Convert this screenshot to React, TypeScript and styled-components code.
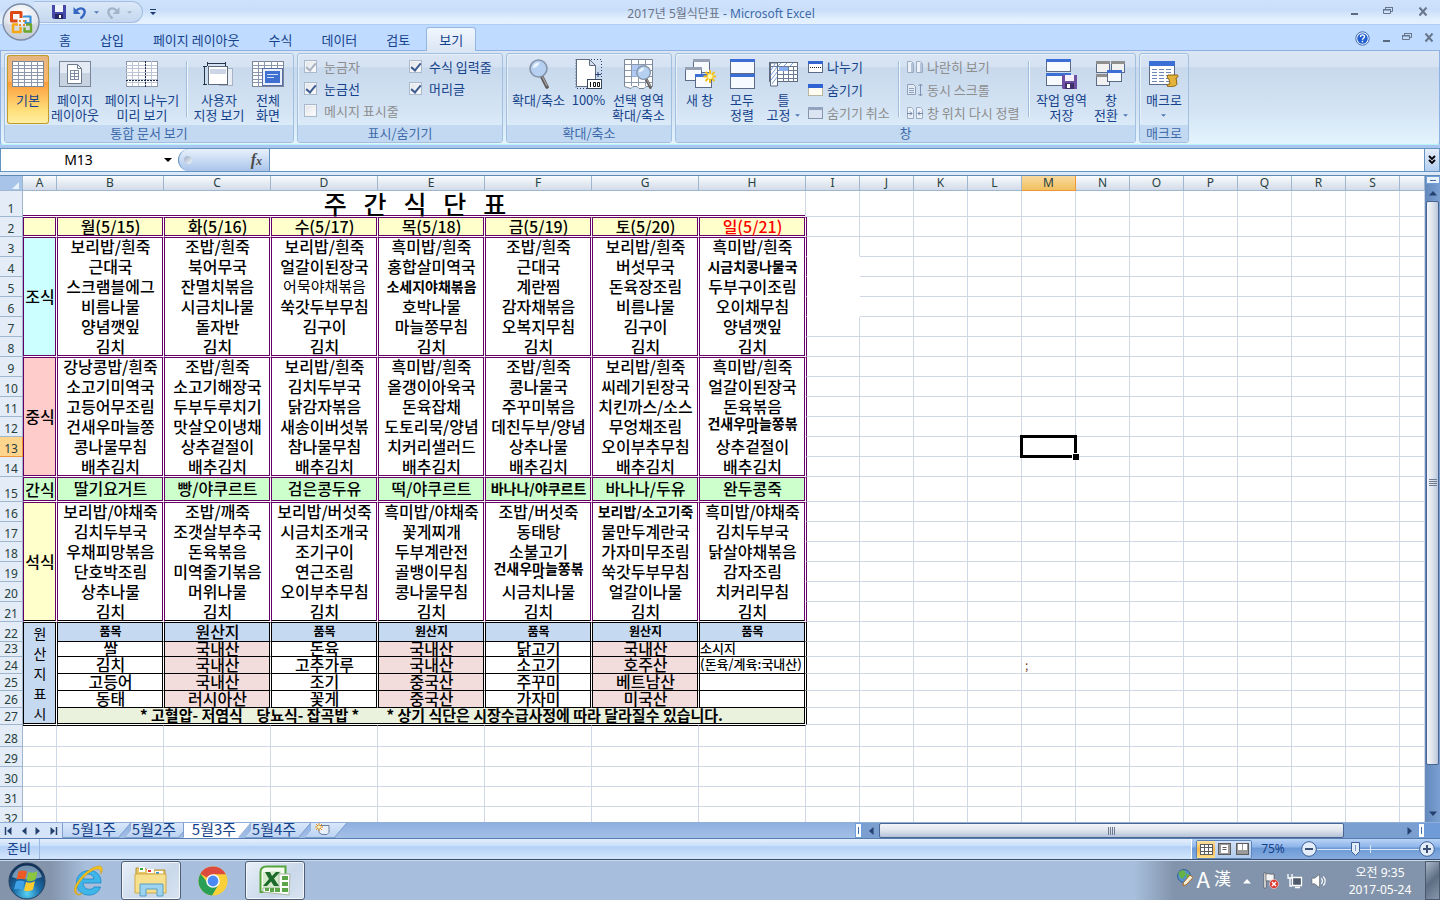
import React from "react";
import styled, { createGlobalStyle, css } from "styled-components";

const PURPLE = "#660066";
const BLACK = "#000000";
const GRID = "#d0d7e5";
const NAVY = "#15428b";
const UI_FONT = '"Noto Sans CJK KR", "Noto Sans", sans-serif';
const LATIN_FONT = '"Noto Sans", "Noto Sans CJK KR", sans-serif';

const GlobalStyle = createGlobalStyle`
  * { box-sizing: border-box; }
  body { margin: 0; font-family: ${UI_FONT}; font-size: 13px; color: ${NAVY}; overflow: hidden; }
  button, input { font: inherit; color: inherit; margin: 0; padding: 0; border: 0; background: none; border-radius: 0; }
  svg { display: block; flex: none; }
`;

const Window = styled.div`
  display: flex;
  flex-direction: column;
  height: 100vh;
  background: #bfdbff;
`;

/* ---------- title bar ---------- */
const TopArea = styled.header`
  position: relative;
  flex: none;
`;
const TitleBar = styled.div`
  height: 25px;
  display: flex;
  align-items: center;
  justify-content: space-between;
  padding-left: 34px;
  border-bottom: 1px solid #b0cff7;
  background: linear-gradient(#cfe2fb 0, #c9defa 40%, #e2effe 80%, #e6f1fe);
`;
const TitleText = styled.h1`
  position: absolute;
  left: 0;
  right: 0;
  top: 5px;
  margin: 0;
  padding-left: 2px;
  text-align: center;
  font: 400 12px/18px ${LATIN_FONT};
  color: #6a7486;
  pointer-events: none;
  span { color: #3e6aaa; }
`;
const QuickBar = styled.div`
  display: flex;
  align-items: center;
  gap: 7px;
`;
const QuickPill = styled.div`
  width: 109px;
  height: 22px;
  padding-left: 18px;
  display: flex;
  align-items: center;
  gap: 7px;
  border: 1px solid #a3bfe3;
  border-left: 0;
  border-radius: 0 11px 11px 0;
  background: linear-gradient(#dbe8f8, #c5d8ef);
`;
const IconButton = styled.button`
  display: flex;
  align-items: center;
  justify-content: center;
`;
const OfficeButton = styled.button`
  position: absolute;
  left: 2px;
  top: 3px;
  width: 38px;
  height: 38px;
`;
const WinButtons = styled.div`
  display: flex;
  align-items: center;
  gap: 25px;
  padding-right: 12px;
`;

/* ---------- ribbon tabs ---------- */
const TabBar = styled.nav`
  height: 25px;
  display: flex;
  justify-content: space-between;
  padding: 2px 6px 0 47px;
`;
const TabList = styled.div`
  display: flex;
  gap: 5px;
`;
const Tab = styled.button<{ $active?: boolean }>`
  padding: 0 12px;
  height: 24px;
  line-height: 20px;
  border: 1px solid transparent;
  border-width: 1px 0 0;
  ${(p) => p.$active && css`
    background: linear-gradient(#f0f6fd, #dbe6f5);
    border-color: #94b6e3;
    border-radius: 3px 3px 0 0;
    box-shadow: -1px 0 0 #94b6e3, 1px 0 0 #94b6e3;
  `}
`;
const TabTools = styled.div`
  display: flex;
  align-items: center;
  gap: 12px;
`;

/* ---------- ribbon ---------- */
const Ribbon = styled.section`
  flex: none;
  height: 98px;
  padding-bottom: 2px;
  background: #a9c7ee;
`;
const RibbonPanel = styled.div`
  height: 95px;
  display: flex;
  gap: 3px;
  padding: 2px 3px;
  border: 1px solid #8db2e3;
  border-bottom-color: #b9f2fb;
  border-radius: 0 0 3px 3px;
  background: linear-gradient(#dbe6f4 0, #d5e2f2 17%, #c8d9ed 18%, #d4e4f4 65%, #e3f4fd);
`;
const Group = styled.div<{ $w: number }>`
  width: ${(p) => p.$w}px;
  height: 90px;
  display: flex;
  flex-direction: column;
  border: 1px solid #a1bfde;
  border-radius: 3px;
  overflow: hidden;
  box-shadow: inset 1px 1px 0 #e8f1fa;
`;
const GroupBody = styled.div`
  flex: 1;
  display: flex;
  padding: 1px 2px 0;
`;
const GroupLabel = styled.div`
  height: 17px;
  line-height: 16px;
  text-align: center;
  color: #3e6aaa;
  background: #c2d9f1;
`;
const BigButton = styled.button<{ $w: number; $on?: boolean }>`
  width: ${(p) => p.$w}px;
  height: 69px;
  flex: none;
  display: flex;
  flex-direction: column;
  align-items: center;
  gap: 2px;
  padding-top: 3px;
  line-height: 15px;
  white-space: pre;
  ${(p) => p.$on && css`
    border-radius: 3px;
    background: linear-gradient(#e3b583 0, #fcb766 38%, #fd9c3c 40%, #fedf7a 80%, #fff0a8);
    box-shadow: inset 0 0 0 1px #c29b29;
  `}
`;
const IconBox = styled.span`
  height: 32px;
  display: flex;
  align-items: center;
`;
const Separator = styled.span`
  width: 2px;
  height: 56px;
  margin: 6px 3px 0;
  flex: none;
  background: linear-gradient(90deg, #a0bcdc 50%, #f3f8fd 50%);
`;
const SmallColumn = styled.div<{ $w: number }>`
  width: ${(p) => p.$w}px;
  flex: none;
  display: flex;
  flex-direction: column;
  padding-left: 4px;
`;
const SmallButton = styled.button`
  height: 23px;
  display: flex;
  align-items: center;
  gap: 4px;
  white-space: nowrap;
  &:disabled { color: #8d8d8d; }
`;
const CheckGrid = styled.div`
  display: grid;
  grid-template-columns: 105px auto;
  grid-auto-rows: 22px;
  align-content: start;
  padding-left: 4px;
`;
const CheckLabel = styled.label<{ $off?: boolean }>`
  display: flex;
  align-items: center;
  gap: 7px;
  white-space: nowrap;
  color: ${(p) => (p.$off ? "#8d8d8d" : NAVY)};
`;
const CheckBox = styled.input`
  appearance: none;
  width: 13px;
  height: 13px;
  display: flex;
  justify-content: center;
  background: linear-gradient(135deg, #dfe3e8, #fff);
  border: 1px solid #abb9cc;
  box-shadow: inset 0 0 0 1px #f4f4f4;
  &:checked::after {
    content: "";
    width: 4px;
    height: 8px;
    border: solid #3d5c92;
    border-width: 0 2px 2px 0;
    transform: rotate(40deg);
  }
  &:disabled:checked::after { border-color: #a9b2c2; }
`;

/* ---------- formula bar ---------- */
const FormulaBar = styled.div`
  flex: none;
  height: 28px;
  display: flex;
  border-top: 1px solid #6593c1;
  border-bottom: 1px solid #6188b0;
  background: #dce9f8;
  padding-bottom: 3px;
`;
const NameBox = styled.div`
  width: 178px;
  display: flex;
  align-items: center;
  padding-right: 6px;
  background: #fff;
  border-bottom: 1px solid #6593c1;
  border-left: 1px solid #6593c1;
`;
const NameInput = styled.input`
  flex: 1;
  min-width: 0;
  padding-right: 8px;
  text-align: center;
  color: #000;
  font: 400 14px/20px ${LATIN_FONT};
`;
const FxArea = styled.div`
  width: 92px;
  background: #fff;
  border-right: 1px solid #6593c1;
  border-bottom: 1px solid #6593c1;
`;
const FxPill = styled.div`
  height: 100%;
  display: flex;
  align-items: center;
  justify-content: space-between;
  padding: 0 7px 0 5px;
  border-left: 1px solid #6593c1;
  border-radius: 11px 0 0 11px;
  background: linear-gradient(#e8f1fc, #c3d7f1 60%, #a9c4ea);
`;
const FxDot = styled.span`
  width: 8px;
  height: 8px;
  border-radius: 50%;
  background: linear-gradient(135deg, #9daec5, #f2f6fb);
`;
const FxButton = styled.button`
  font: italic 700 16px/20px "Liberation Serif", serif;
  color: #4a4a4a;
  span { font-size: 12px; }
`;
const FormulaInput = styled.input`
  flex: 1;
  min-width: 0;
  background: #fff;
  border-bottom: 1px solid #6593c1;
`;
const ExpandButton = styled(IconButton)`
  width: 16px;
  border: 1px solid #6593c1;
  border-top: 0;
  background: linear-gradient(#e4eefb, #b4ceef);
`;

/* ---------- sheet ---------- */
const SheetArea = styled.main`
  flex: 1;
  min-height: 0;
  display: flex;
`;
const SheetClip = styled.div`
  flex: 1;
  min-width: 0;
  overflow: hidden;
  background: #fff;
`;
const Grid = styled.table`
  width: 100%;
  table-layout: fixed;
  border-collapse: separate;
  border-spacing: 0;
  color: #000;
`;
const GridRow = styled.tr<{ $h: number }>`
  height: ${(p) => p.$h}px;
`;
const ColHead = styled.th<{ $on?: boolean }>`
  height: 15px;
  padding: 0;
  font: 400 12px/14px ${LATIN_FONT};
  color: #27413e;
  border-right: 1px solid ${(p) => (p.$on ? "#f29536" : "#9eb6ce")};
  border-bottom: 1px solid ${(p) => (p.$on ? "#f29536" : "#9eb6ce")};
  background: ${(p) => (p.$on ? "linear-gradient(#f9d99f, #f1c15f)" : "linear-gradient(#f9fcfd, #d3dbe9)")};
`;
const Corner = styled(ColHead)`
  background: #a9c4e9;
  svg { margin: 2px 3px 0 auto; }
`;
const RowHead = styled.th<{ $on?: boolean }>`
  padding: 0;
  vertical-align: bottom;
  font: 400 12px/14px ${LATIN_FONT};
  color: #27413e;
  background: ${(p) => (p.$on ? "#ffd58d" : "#e4ecf7")};
  border-right: 1px solid ${(p) => (p.$on ? "#f29536" : "#9eb6ce")};
  border-bottom: 1px solid ${(p) => (p.$on ? "#f29536" : "#9eb6ce")};
`;
const EmptyCell = styled.td<{ $left?: string; $top?: string; $noRight?: boolean; $noBottom?: boolean; $ink?: string }>`
  position: relative;
  padding: 0 0 0 3px;
  font-size: 12px;
  line-height: 12px;
  color: ${(p) => p.$ink || "#000"};
  border-right: 1px solid ${(p) => (p.$noRight ? "#fff" : GRID)};
  border-bottom: 1px solid ${(p) => (p.$noBottom ? "#fff" : GRID)};
  ${(p) => p.$left && css`border-left: 1px solid ${p.$left};`}
  ${(p) => p.$top && css`border-top: 1px solid ${p.$top};`}
`;
const SheetTitle = styled.td`
  padding: 0;
  vertical-align: top;
  border-right: 1px solid ${GRID};
  border-bottom: 1px solid #fff;
  box-shadow: inset 0 -1px 0 ${PURPLE};
  div {
    height: 23px;
    padding-left: 2px;
    line-height: 25px;
    text-align: center;
    white-space: pre;
    font-size: 25px;
    font-weight: 500;
  }
`;
type Edge = "none" | "single" | "double";
const BoxCell = styled.td<{ $bg?: string; $line: string; $top?: boolean; $bottom: Edge; $bottomLine?: string }>`
  padding: 0;
  vertical-align: top;
  background: ${(p) => p.$bg || "#fff"};
  border-left: 1px solid ${(p) => p.$line};
  border-right: 1px solid #fff;
  ${(p) => p.$top && css`border-top: 1px solid ${p.$line};`}
  ${(p) => p.$bottom === "double" && css`border-bottom: 1px solid #fff;`}
  ${(p) => p.$bottom === "single" && css`border-bottom: 1px solid ${p.$line};`}
  box-shadow: inset -1px 0 0 ${(p) => p.$line}
    ${(p) => p.$bottom === "double" && css`, inset 0 -1px 0 ${p.$bottomLine || p.$line}`};
`;
type TextKind = "normal" | "small" | "thin" | "wrap" | "label" | "note" | "side" | "foot";
const CellText = styled.div<{ $h: number; $kind: TextKind; $red?: boolean }>`
  height: ${(p) => p.$h}px;
  display: flex;
  align-items: center;
  justify-content: center;
  white-space: pre;
  text-align: center;
  font-size: 16px;
  line-height: 16px;
  font-weight: 500;
  color: ${(p) => (p.$red ? "#ff0000" : "#000")};
  ${(p) => p.$kind === "small" && css`font-size: 14px; font-weight: 700;`}
  ${(p) => p.$kind === "thin" && css`font-size: 15px; font-weight: 400;`}
  ${(p) => p.$kind === "wrap" && css`font-size: 14px; font-weight: 700; line-height: 13px; align-items: flex-start; overflow: hidden;`}
  ${(p) => p.$kind === "label" && css`font-size: 12px; font-weight: 700;`}
  ${(p) => p.$kind === "note" && css`font-size: 13px; justify-content: flex-start;`}
  ${(p) => p.$kind === "side" && css`font-size: 14px; line-height: 20px; font-weight: 400;`}
  ${(p) => p.$kind === "foot" && css`font-size: 15px; font-weight: 700;`}
`;
const Selection = styled.span`
  position: absolute;
  z-index: 1;
  inset: -2px;
  border: 3px solid #000;
  &::after {
    content: "";
    position: absolute;
    right: -5px;
    bottom: -5px;
    width: 6px;
    height: 6px;
    background: #000;
    border: solid #fff;
    border-width: 1px 0 0 1px;
  }
`;
const VScroll = styled.div`
  width: 15px;
  flex: none;
  display: flex;
  flex-direction: column;
  align-items: center;
  background: linear-gradient(90deg, #6389bd, #7b9fd0);
`;
const VSplit = styled.span`
  width: 14px;
  height: 8px;
  padding: 3px;
  border: 1px solid #6f9dd9;
  background: #eaf2fc;
  &::after { content: ""; display: block; height: 1px; background: #3f6ba7; }
`;
const VThumb = styled.div`
  width: 13px;
  flex: 1;
  display: flex;
  align-items: center;
  justify-content: center;
  border: 1px solid #4a6591;
  border-radius: 2px;
  background: linear-gradient(90deg, #f3f6fa, #dfe4ec 50%, #b9c6da);
`;
const VGap = styled.div`
  height: 57px;
  display: flex;
  align-items: flex-end;
  padding-bottom: 3px;
`;
const VArrow = styled.div`
  height: 17px;
  display: flex;
  align-items: center;
`;

/* ---------- sheet tabs / horizontal scroll ---------- */
const SheetTabs = styled.div`
  flex: none;
  height: 16px;
  display: flex;
  background: linear-gradient(#8fb0e0, #a3bfe6);
  border-top: 1px solid #8fafd9;
`;
const TabNav = styled.div`
  width: 63px;
  display: flex;
  align-items: center;
  justify-content: space-around;
  padding: 0 2px;
  background: #d5e4f8;
  border-right: 1px solid #7f9fcf;
`;
const SheetTab = styled.button<{ $active?: boolean; $w?: number; $first?: boolean }>`
  position: relative;
  width: ${(p) => p.$w || 60}px;
  height: 15px;
  padding: 0 0 3px 2px;
  line-height: 12px;
  font-size: 15px;
  z-index: ${(p) => (p.$active ? 2 : 1)};
  display: flex;
  align-items: center;
  justify-content: center;
  &::before {
    content: "";
    position: absolute;
    inset: 0 -2px 0 8px;
    z-index: -1;
    transform: skewX(-40deg);
    border-right: 1px solid #7f9fcf;
    border-bottom: 1px solid ${(p) => (p.$active ? "#fff" : "#7f9fcf")};
    background: ${(p) => (p.$active ? "#fff" : "linear-gradient(#d9e7fa, #bcd3f2)")};
  }
  &::after {
    content: "";
    position: absolute;
    inset: 0 20px 0 ${(p) => (p.$active || p.$first ? "0" : "8px")};
    z-index: -1;
    border-left: ${(p) => (p.$active ? "1px solid #7f9fcf" : "0")};
    border-bottom: 1px solid ${(p) => (p.$active ? "#fff" : "#7f9fcf")};
    background: ${(p) => (p.$active ? "#fff" : "linear-gradient(#d9e7fa, #bcd3f2)")};
  }
`;
const TabSet = styled.div`
  flex: 1;
  display: flex;
  isolation: isolate;
`;
const HScroll = styled.div`
  flex: 0 0 570px;
  width: 570px;
  display: flex;
  align-items: center;
  background: #7b9fd0;
`;
const HSplit = styled.span`
  width: 7px;
  height: 15px;
  padding: 3px 2px;
  background: #fff;
  border: 1px solid #6f9dd9;
  &::after { content: ""; display: block; width: 1px; height: 7px; background: #3f6ba7; }
`;
const HThumb = styled.div`
  flex: 1;
  height: 15px;
  display: flex;
  align-items: center;
  justify-content: center;
  border: 1px solid #4a6591;
  border-radius: 2px;
  background: linear-gradient(#f3f6fa, #dfe4ec 50%, #b3c2d8);
`;
const HArrow = styled.span<{ $w: number }>`
  width: ${(p) => p.$w}px;
  display: flex;
  justify-content: center;
`;
const HRest = styled.span`
  width: 57px;
`;
const ScrollCorner = styled.span`
  width: 15px;
  background: #6f9bd8;
`;

/* ---------- status bar ---------- */
const StatusBar = styled.footer`
  flex: none;
  height: 22px;
  display: flex;
  border-top: 1px solid #567db0;
  border-bottom: 1px solid #3b4e6b;
  background: linear-gradient(#e3eefc 0, #c9dffb 35%, #b3d0f5 38%, #cfe3fb 90%);
`;
const Ready = styled.div`
  width: 40px;
  padding-left: 7px;
  line-height: 18px;
  border-right: 1px solid #9ab8e0;
`;
const StatusRight = styled.div`
  margin-left: auto;
  width: 249px;
  display: flex;
  align-items: center;
  padding-left: 4px;
  padding-right: 5px;
  border-left: 1px solid #fff;
  background: linear-gradient(#b9d3f7, #8db4e8 40%, #6c9ad6 45%, #86acdf);
`;
const ViewButtons = styled.div`
  display: flex;
  height: 19px;
  border: 1px solid #5d83b8;
  border-radius: 2px;
`;
const ViewButton = styled(IconButton)<{ $on?: boolean }>`
  width: 18px;
  background: ${(p) => (p.$on ? "linear-gradient(#fde3a5, #fbb94c 50%, #fee08a)" : "linear-gradient(#d2e2f7, #b1cbee)")};
`;
const Zoom = styled.button`
  width: 42px;
  font: 400 12px/18px ${LATIN_FONT};
`;
const ZoomTrack = styled.div`
  flex: 1;
  display: flex;
  align-items: center;
  margin-left: 7px;
`;
const ZoomRail = styled.div`
  flex: 1;
  height: 16px;
  display: flex;
  align-items: center;
  padding-left: 34px;
  gap: 10px;
  background: linear-gradient(#dbe8fa, #dbe8fa) center / 100% 1px no-repeat;
`;
const Tick = styled.span`
  width: 1px;
  height: 8px;
  background: #dbe8fa;
`;

/* ---------- taskbar ---------- */
const TaskBar = styled.div`
  flex: none;
  height: 40px;
  display: flex;
  align-items: center;
  border-top: 1px solid #c7d9ec;
  background: linear-gradient(90deg, #8394ab 0, #8394ab 50px, #a7bfdc 86px, #a7bfdc calc(100% - 306px), #8294ab calc(100% - 266px));
`;
const TaskButton = styled.button<{ $w: number; $open?: boolean }>`
  width: ${(p) => p.$w}px;
  height: 39px;
  display: flex;
  align-items: center;
  justify-content: center;
  ${(p) => p.$open && css`
    border: 1px solid #4e5f77;
    border-radius: 3px;
    background: linear-gradient(135deg, #e8eff8, #c9d8ea 60%, #d9e4f1);
    box-shadow: inset 0 0 0 1px #f3f7fc;
  `}
`;
const Tray = styled.div`
  margin-left: auto;
  display: flex;
  align-items: center;
  gap: 8px;
  height: 100%;
  color: #fff;
`;
const TrayMore = styled(IconButton)`
  padding: 0 3px;
`;
const Ime = styled.div`
  display: flex;
  align-items: center;
  gap: 4px;
  padding-bottom: 6px;
`;
const ImeButton = styled.button<{ $size: number }>`
  font: 400 ${(p) => p.$size}px/24px "Noto Sans CJK KR", sans-serif;
`;
const Clock = styled.div`
  width: 90px;
  text-align: center;
  font: 400 12px/17px ${LATIN_FONT};
`;
const ShowDesktop = styled.button`
  width: 15px;
  height: 39px;
  border: 1px solid #4b5a6e;
  background: linear-gradient(135deg, #a9b6c8, #5d6d83 50%, #8796ab);
`;

/* ---------- icon drawings ---------- */
const Caret = ({ color = "#4f7ab5", w = 5 }: { color?: string; w?: number }) => (
  <svg width={w} height={Math.ceil(w / 2)} viewBox="0 0 6 3"><path d="M0 0h6L3 3z" fill={color} /></svg>
);
const Arrow = ({ dir, color = "#24406e", bar }: { dir: "l" | "r" | "u" | "d"; color?: string; bar?: boolean }) => {
  const rot = { u: 0, r: 90, d: 180, l: 270 }[dir];
  return (
    <svg width="10" height="10" viewBox="0 0 10 10">
      <g transform={`rotate(${rot} 5 5)`}>
        <path d="M1 7.5h8L5 3z" fill={color} />
        {bar && <path d="M1 1.5h8" stroke={color} strokeWidth="1.5" />}
      </g>
    </svg>
  );
};
const OfficeLogo = () => (
  <svg width="38" height="38" viewBox="0 0 38 38">
    <defs>
      <radialGradient id="orbWhite" cx=".5" cy=".3" r=".75">
        <stop offset="0" stopColor="#ffffff" /><stop offset=".6" stopColor="#e3e7ee" /><stop offset="1" stopColor="#b2bdcd" />
      </radialGradient>
    </defs>
    <circle cx="19" cy="19" r="18" fill="url(#orbWhite)" stroke="#7d8ca6" strokeWidth="1.4" />
    <path d="M3 20a16 16 0 0 0 32 0c-8 3-24 3-32 0z" fill="#c9cfda" opacity=".6" />
    <g fill="none" strokeLinejoin="round">
      <path d="M15.500 18H9.500V9.500h9.500v5.500" stroke="#dc4a12" strokeWidth="3" />
      <path d="M22 14.500v-1h6.500v6.500h-5v-3" stroke="#3c8fd6" strokeWidth="2.200" />
      <path d="M16 21.500h-5v7.500h7.500v-5" stroke="#f3a712" strokeWidth="2.400" />
      <path d="M24 21.500h5v7h-6.500v-4" stroke="#6aa52c" strokeWidth="2.400" />
    </g>
    <path d="M17 17h2v2h-2zM21 17h2v2h-2zM17 21h2v2h-2zM21 21h2v2h-2z" fill="#e98a2b" />
  </svg>
);
const SaveIcon = () => (
  <svg width="14" height="14" viewBox="0 0 14 14">
    <path d="M0 0h14v14H1.500L0 12.500z" fill="#4547a9" /><path d="M3 0h8v7H3z" fill="#eef2fb" />
    <path d="M3 9h8v5H3z" fill="#23265f" /><path d="M7 10h2v3H7z" fill="#fff" />
  </svg>
);
const UndoIcon = ({ off }: { off?: boolean }) => (
  <svg width="14" height="13" viewBox="0 0 13 13">
    <g transform={off ? "translate(13 0) scale(-1 1)" : undefined}>
      <path d="M3 4.500C6 1 12 2 11 7c-.5 2.500-2 4-4 5.500" fill="none" stroke={off ? "#a5b4ca" : "#3566c0"} strokeWidth="2.400" />
      <path d="M0 1v7h7z" fill={off ? "#a5b4ca" : "#3566c0"} />
    </g>
  </svg>
);
const QuickMore = () => (
  <svg width="6" height="7" viewBox="0 0 6 7"><path d="M0 0h6v1H0zM0 3h6L3 6z" fill="#1f3d73" /></svg>
);
const MinIcon = () => <svg width="8" height="12" viewBox="0 0 8 12"><path d="M1 7h7v2H1z" fill="#5c6a80" /></svg>;
const RestoreIcon = () => (
  <svg width="10" height="11" viewBox="0 0 10 11">
    <path d="M2.500 2V.5h7v4H8M.5 2.500h7v4h-7z" fill="none" stroke="#68768c" /><path d="M0 2h8v1.500H0zM2 0h8v1H2z" fill="#68768c" />
  </svg>
);
const CloseIcon = () => (
  <svg width="10" height="11" viewBox="0 0 10 11"><path d="M1.500 .5l7 8M8.500 .5l-7 8" stroke="#68768c" strokeWidth="2" /></svg>
);
const HelpIcon = () => (
  <svg width="15" height="15" viewBox="0 0 15 15">
    <circle cx="7.500" cy="7.500" r="6.700" fill="#f4f9ff" stroke="#3d68b5" />
    <circle cx="7.500" cy="7.500" r="5.200" fill="#2060d0" />
    <path d="M5.500 6c0-3 4-2.700 4-.3 0 1.500-2 1.500-2 3M7.500 9.800v1.400" fill="none" stroke="#fff" strokeWidth="1.400" />
  </svg>
);
const CornerMark = () => <svg width="7" height="9" viewBox="0 0 7 9"><path d="M7 2v7H0z" fill="#e9f1fb" /></svg>;
const gridLines = (x: number, y: number, w: number, h: number, nx: number, ny: number) => {
  let d = "";
  for (let i = 1; i < nx; i++) d += `M${x + Math.round((w * i) / nx) + 0.5} ${y}v${h}`;
  for (let i = 1; i < ny; i++) d += `M${x} ${y + Math.round((h * i) / ny) + 0.5}h${w}`;
  return d;
};
const NormalIcon = () => (
  <svg width="32" height="26" viewBox="0 0 32 26">
    <rect x=".5" y=".5" width="31" height="25" fill="#fff" stroke="#7b8798" /><path d={gridLines(0, 0, 31, 25, 5, 7)} stroke="#8b98ab" />
  </svg>
);
const PageIcon = () => (
  <svg width="32" height="26" viewBox="0 0 32 26">
    <rect x=".5" y=".5" width="31" height="25" fill="#e3eaf3" stroke="#7b8798" /><path d="M1 12h30v13H1z" fill="#c8d3e2" />
    <path d="M8.500 3.500h10l4 4v15h-14z" fill="#fff" stroke="#6d7a8e" />
    <path d="M18.500 3.500v4h4" fill="none" stroke="#6d7a8e" /><path d="M11 9.500h9M11 12.500h9M11 15.500h9M11 18.500h9M11.500 9v10M15.500 9v10M19.500 9v10" stroke="#7c8ba3" />
  </svg>
);
const BreakIcon = () => (
  <svg width="32" height="26" viewBox="0 0 32 26">
    <rect x=".5" y=".5" width="31" height="25" fill="#fff" stroke="#8d99ab" /><path d={gridLines(0, 0, 31, 25, 5, 7)} stroke="#bcc5d3" />
    <path d="M19.500 0v26M0 19.500h32" stroke="#1d2c4c" strokeDasharray="2 1" />
  </svg>
);
const CustomIcon = () => (
  <svg width="32" height="26" viewBox="0 0 32 26">
    <rect x="16.500" y="7.500" width="13" height="17" fill="#e9eef5" stroke="#a9b3c3" />
    <rect x="5.500" y="5.500" width="19" height="18" fill="#fff" stroke="#5c687c" />
    <path d="M7 8h16v5H7z" fill="#ccd6e6" /><path d="M4.500 1v4M22.500 1v4M5 2.500h17M0 5.500h4M0 23.500h4M1.500 6v17" stroke="#26334d" fill="none" />
  </svg>
);
const FullIcon = () => (
  <svg width="32" height="26" viewBox="0 0 32 26">
    <rect x=".5" y=".5" width="31" height="25" fill="#fff" stroke="#7b8798" /><path d={gridLines(0, 0, 31, 25, 5, 7)} stroke="#8b98ab" />
    <rect x="10.500" y="7.500" width="20" height="17" fill="#e9f0fb" stroke="#5570a8" /><rect x="13" y="10" width="15" height="12" fill="#3f6fd0" />
    <path d="M15 13.500h11M15 16.500h7" stroke="#cfe0fb" />
  </svg>
);
const Lens = ({ x = 0, y = 0, s = 1 }: { x?: number; y?: number; s?: number }) => (
  <g transform={`translate(${x} ${y}) scale(${s})`}>
    <path d="M13 18l5 10" stroke="#5e5a5a" strokeWidth="3.600" strokeLinecap="round" /><path d="M13.500 18l4.500 9" stroke="#a8a4a4" strokeWidth="1.200" />
    <circle cx="9.500" cy="9.500" r="8.500" fill="#b5d0f0" stroke="#8593a8" strokeWidth="1.600" /><path d="M3.500 9a6 6 0 0 1 7-5.500c-1 4-3 5-7 5.500z" fill="#eaf4ff" />
  </g>
);
const ZoomIcon = () => <svg width="20" height="31" viewBox="0 0 20 31"><Lens /></svg>;
const HundredIcon = () => (
  <svg width="28" height="32" viewBox="0 0 28 32">
    <path d="M1 1.500h25.500v29H1z" fill="none" stroke="#29406d" strokeDasharray="1 2" />
    <path d="M1.500 1.500h13l6 6v21h-19z" fill="#fff" stroke="#5e6b80" /><path d="M14.500 1.500v6h6z" fill="#d8e0ec" stroke="#5e6b80" />
    <path d="M20 16.500h6M23 14v5" stroke="#29406d" />
    <rect x="12.500" y="21.500" width="14" height="9" fill="#fff" stroke="#39465c" />
    <path d="M15.500 24v5M18.500 24.500h2v4h-2zM22.500 24.500h2v4h-2z" fill="none" stroke="#111" />
  </svg>
);
const ZoomSelIcon = () => (
  <svg width="30" height="32" viewBox="0 0 30 32">
    <path d="M.5 1.500h28v27H22l-2 2h-5l-2-2H9l-2 2-6.500-2z" fill="#fff" stroke="#7b8798" />
    <path d="M1 6.500h27M1 12.500h27M1 18.500h27M1 24.500h27M7.500 2v26M14.500 2v26M21.500 2v26" stroke="#8b98ab" />
    <path d="M8 7h13v12H8z" fill="#9bbcf0" opacity=".8" /><Lens x={12} y={7} s={0.8} />
  </svg>
);
const Win = ({ x, y, w, h, c = "#3b6fd6", f = "#f7fafe" }: { x: number; y: number; w: number; h: number; c?: string; f?: string }) => (
  <g><rect x={x + 0.5} y={y + 0.5} width={w - 1} height={h - 1} fill={f} stroke="#5b6b88" /><rect x={x} y={y} width={w} height={3} fill={c} /></g>
);
const NewWinIcon = () => (
  <svg width="32" height="32" viewBox="0 0 32 32">
    <Win x={9} y={1} w={17} h={14} c="#97a3b5" /><Win x={1} y={9} w={17} h={14} c="#97a3b5" /><Win x={11} y={16} w={17} h={14} />
    <path d="M26 12v13M19.500 18.500h13M21.500 14l9 9M30.500 14l-9 9" stroke="#f5bf1a" strokeWidth="2" /><circle cx="26" cy="18.500" r="2.500" fill="#fff9b0" />
  </svg>
);
const ArrangeIcon = () => <svg width="25" height="30" viewBox="0 0 25 30"><Win x={0} y={0} w={25} h={15} /><Win x={0} y={15} w={25} h={15} /></svg>;
const FreezeIcon = () => (
  <svg width="30" height="26" viewBox="0 0 30 26">
    <rect x=".5" y="1.500" width="28" height="19" fill="#fff" stroke="#5e6b80" /><path d="M1.500 2v23h7V2z" fill="#fff" stroke="#5e6b80" />
    <path d="M9 9.500h20M9 13.500h20M9 17.500h20M14.500 5v16M19.500 5v16M24.500 5v16M1 5.500h28" stroke="#6c7c96" />
    <path d="M10 6h9v4h-9z" fill="#88aef0" /><path d="M2 9l4-6M2 14l6-8M2 19l6-8M3 23l5-7M9 5l3-3M15 5l3-3M21 5l3-3" stroke="#7aa0dd" />
  </svg>
);
const SplitIcon = () => (
  <svg width="15" height="12" viewBox="0 0 15 12"><rect x=".5" y=".5" width="14" height="11" fill="#fff" stroke="#5b6b88" /><path d="M0 0h15v3H0z" fill="#3465cf" /><path d="M2 6.500h11" stroke="#222" strokeDasharray="1 1" /></svg>
);
const HideIcon = () => (
  <svg width="15" height="12" viewBox="0 0 15 12"><rect x=".5" y=".5" width="14" height="11" fill="#fffdf2" stroke="#8a7c50" strokeDasharray="1 1" /><path d="M0 0h15v4H0z" fill="#2f62d2" /></svg>
);
const UnhideIcon = () => (
  <svg width="15" height="12" viewBox="0 0 15 12"><rect x=".5" y=".5" width="14" height="11" fill="#dbe4f0" stroke="#8796b0" /><path d="M0 0h15v3H0z" fill="#93a3bd" /></svg>
);
const SideIcon = () => (
  <svg width="16" height="13" viewBox="0 0 16 13"><path d="M.5 1.500h4l2 2v9h-6zM9.500 1.500h4l2 2v9h-6z" fill="#edf2f8" stroke="#9aabc4" /><path d="M5 3v9M14 3v9" stroke="#b5c3d8" strokeWidth="2" /></svg>
);
const SyncIcon = () => (
  <svg width="16" height="14" viewBox="0 0 16 14"><path d="M.5 1.500h6l2 2v8h-8zM2 5.500h5M2 7.500h5M2 9.500h5" fill="#e3eaf4" stroke="#8fa1bd" /><path d="M13.500 1v12M11.500 3l2-2 2 2M11.500 11l2 2 2-2" fill="none" stroke="#7f92b1" /></svg>
);
const ResetIcon = () => (
  <svg width="16" height="13" viewBox="0 0 16 13"><path d="M.5 1.500h4l2 2v9h-6zM9.500 1.500h4l2 2v9h-6z" fill="#edf2f8" stroke="#9aabc4" /><path d="M0 7.500h5M3 5.500l2 2-2 2M16 7.500h-5M13 5.500l-2 2 2 2" fill="none" stroke="#6f84a6" /></svg>
);
const WorkspaceIcon = () => (
  <svg width="31" height="32" viewBox="0 0 31 32">
    <Win x={0} y={1} w={25} h={13} /><Win x={0} y={15} w={25} h={13} />
    <path d="M16 17h15v14H17l-1-1z" fill="#6d4fa3" /><path d="M19 17h9v6h-9z" fill="#f4f0fb" /><path d="M19 25h9v6h-9z" fill="#40306a" /><path d="M21 26h3v4h-3z" fill="#fff" />
  </svg>
);
const SwitchIcon = () => (
  <svg width="30" height="26" viewBox="0 0 30 26">
    <Win x={0} y={0} w={14} h={12} c="#8f8f8f" f="#f1f1f1" /><Win x={15} y={0} w={14} h={12} c="#8f8f8f" f="#f1f1f1" />
    <Win x={0} y={13} w={14} h={12} c="#8f8f8f" f="#f1f1f1" /><Win x={11} y={9} w={15} h={12} />
  </svg>
);
const MacroIcon = () => (
  <svg width="30" height="26" viewBox="0 0 30 26">
    <rect x=".5" y=".5" width="25" height="23" fill="#fff" stroke="#5b6b88" /><path d="M0 0h26v5H0z" fill="#3b6fd6" />
    <path d="M3 8.500h20M3 11.500h20M3 14.500h20M3 17.500h20M3 20.500h20" stroke="#6d85b5" strokeDasharray="5 2" />
    <path d="M19 14h9c2 0 1 3-1 3l1 6c-1 3-8 3-10 2 0-2 2-2 3-2l-1-5c-2 0-2-3-1-4z" fill="#e4b33a" stroke="#8c6414" />
  </svg>
);
const NewSheetIcon = () => (
  <svg width="15" height="12" viewBox="0 0 15 12">
    <path d="M4 2.500h10v7l-2 2H7l-3-2z" fill="#e7effa" stroke="#6c7f9f" /><path d="M4 0v8M0 4h8M1 1l6 6M7 1L1 7" stroke="#e8941a" /><circle cx="4" cy="4" r="1.500" fill="#fff6b8" />
  </svg>
);
const Grip = ({ vertical }: { vertical?: boolean }) => (
  <svg width="8" height="8" viewBox="0 0 8 8"><path d={vertical ? "M0 .5h8M0 2.500h8M0 4.500h8M0 6.500h8" : "M.5 0v8M2.500 0v8M4.500 0v8M6.500 0v8"} stroke="#6d7b91" /></svg>
);
const ViewNormal = () => <svg width="13" height="11" viewBox="0 0 13 11"><rect x=".5" y=".5" width="12" height="10" fill="#fff" stroke="#5c5c5c" /><path d="M4.500 0v11M8.500 0v11M0 3.500h13M0 7.500h13" stroke="#5c5c5c" /></svg>;
const ViewPage = () => <svg width="13" height="12" viewBox="0 0 13 12"><rect x=".5" y=".5" width="12" height="11" fill="#9a9a9a" stroke="#5c5c5c" /><path d="M3 2h7v8H3z" fill="#fff" /><path d="M4.500 4.500h4M4.500 6.500h4" stroke="#5c5c5c" /></svg>;
const ViewBreak = () => <svg width="13" height="12" viewBox="0 0 13 12"><rect x=".5" y=".5" width="12" height="11" fill="#9a9a9a" stroke="#5c5c5c" /><path d="M2 1h4v6H2zM7 1h4v6H7z" fill="#fff" /></svg>;
const ZoomSign = ({ plus }: { plus?: boolean }) => (
  <svg width="16" height="16" viewBox="0 0 16 16"><circle cx="8" cy="8" r="7.300" fill="#e3edfa" stroke="#3d5f95" /><path d={plus ? "M4 8h8M8 4v8" : "M4 8h8"} stroke="#3d5075" strokeWidth="2" /></svg>
);
const ZoomHandle = () => <svg width="9" height="14" viewBox="0 0 9 14"><path d="M.5 .5h8v9l-4 4-4-4z" fill="#e3edfa" stroke="#3d5f95" /><path d="M4.500 3v6" stroke="#7b98c4" /></svg>;
const StartOrb = () => (
  <svg width="38" height="38" viewBox="0 0 38 38">
    <defs><radialGradient id="orbBlue" cx=".5" cy=".85" r=".8"><stop offset="0" stopColor="#59d4f5" /><stop offset=".45" stopColor="#1c6ca8" /><stop offset="1" stopColor="#0f2f57" /></radialGradient></defs>
    <circle cx="19" cy="19" r="18" fill="url(#orbBlue)" stroke="#27405f" /><path d="M4 15a15.500 15.500 0 0 1 30 0c-8 3-22 3-30 0z" fill="#b5cbe0" opacity=".6" />
    <path d="M10.500 9.500c3-1.500 5.500-1 8.500 0l-2 8c-3-1-5.500-1-8.500 0z" fill="#ee5a24" /><path d="M20.500 10c3 1 6 1 9-1l-2 8.500c-3 2-6 2-9 1z" fill="#8cc63f" />
    <path d="M8 19.500c3-1.500 5.500-1 8.500 0l-2 8c-3-1-5.500-1-8.500 0z" fill="#3fa2e8" /><path d="M18 20c3 1 6 1 9-1l-2 8.500c-3 2-6 2-9 1z" fill="#fccb2f" />
  </svg>
);
const IeIcon = () => (
  <svg width="32" height="32" viewBox="0 0 32 32">
    <path d="M29 18H11c0 7 9 8 11 4h6.500C25 34 4 33 4.500 17 5 2 30 1 29 18zm-7-4c-1-6.500-10-6.500-11 0z" fill="#3fb6ea" stroke="#1e86c4" strokeWidth=".8" />
    <path d="M4 29C-3 23 15 2 27 1c4 0 4 4 2 8 0-3-1-5-4-5C17 5 2 20 4.500 28c1 2 4 1 6 0-3 3-5 2-6.500 1z" fill="#f6c21c" stroke="#c9920c" strokeWidth=".5" />
  </svg>
);
const ExplorerIcon = () => (
  <svg width="34" height="32" viewBox="0 0 34 32">
    <path d="M2 3h9l2 2h18v22H2z" fill="#e9c766" stroke="#b8943a" /><path d="M5 2h6v5H5z" fill="#fff" /><path d="M6 3h3v2H6z" fill="#3aa63a" />
    <path d="M13 4h7v4h-7z" fill="#fff" /><path d="M14 5h3v2h-3z" fill="#d33" /><path d="M21 6h8v4h-8z" fill="#fff" /><path d="M22 7h3v2h-3z" fill="#39c" />
    <path d="M1 9h31v19H1z" fill="#f7e08d" stroke="#cfa94a" /><path d="M6 31V19h23v12h-6v-7H12v7z" fill="#9bd3f0" stroke="#5b9ec7" />
  </svg>
);
const ChromeIcon = () => (
  <svg width="30" height="30" viewBox="0 0 30 30">
    <circle cx="15" cy="15" r="14.500" fill="#f9cf3a" />
    <path d="M2.400 7.800A14.500 14.500 0 0 1 27.800 8.300H15v6.700z" fill="#dd4b3e" />
    <path d="M2.400 7.800A14.500 14.500 0 0 0 14 29.500l6.500-11L15 15l-6 1z" fill="#2aa056" />
    <circle cx="15" cy="15" r="6.800" fill="#fff" /><circle cx="15" cy="15" r="5.400" fill="#4a8af4" />
  </svg>
);
const ExcelIcon = () => (
  <svg width="32" height="31" viewBox="0 0 32 31">
    <path d="M1.500 27V7c0-3 2-5.500 6-5.500h19V27z" fill="#f4fbf0" stroke="#55a53c" strokeWidth="2" />
    <path d="M4 7l18-1v17L4 24z" fill="#d6ebcb" />
    <path d="M20 9h11l-1 21-26-3v-4h16z" fill="#fff" stroke="#a8b8a0" />
    <path d="M23 11h6v4h-6zM23 17h6v4h-6zM23 23h6v4h-6zM16 23h5v4h-5zM6 23h4v3H6zM11 23h4v4h-4z" fill="#5ba548" />
    <path d="M6 7h5l2 4 4-4h4l-6 6.500 5 7.500h-5l-3-4.500L8 21H4l6-7z" fill="#1c6b2a" />
  </svg>
);
const GlobeIcon = () => (
  <svg width="16" height="17" viewBox="0 0 16 17"><circle cx="7" cy="7" r="6.500" fill="#5591cf" stroke="#375f8e" /><path d="M1.500 4c2-3.500 6-3.500 7-1s-1 4-2 6-4 0-5-5zM9 5c3-1 4 1 4 3l-3 4z" fill="#65b346" /><path d="M13 6l3 2.500-7 7.500-3 .5.5-3z" fill="#f5f0d8" stroke="#a8662a" /></svg>
);
const FlagIcon = () => (
  <svg width="16" height="17" viewBox="0 0 16 17"><path d="M1 1h2v15H1z" fill="#fff" stroke="#333" strokeWidth=".5" /><path d="M3 2c3-1 4 1 8 0v7c-4 1-5-1-8 0z" fill="#f4f4f4" stroke="#333" strokeWidth=".5" /><circle cx="11" cy="12" r="4.500" fill="#d9352b" stroke="#fff" strokeWidth=".5" /><path d="M9 10l4 4M13 10l-4 4" stroke="#fff" strokeWidth="1.500" /></svg>
);
const NetIcon = () => (
  <svg width="16" height="16" viewBox="0 0 16 16"><path d="M5.500 4.500h9v8h-9zM8 14.500h5" fill="#4e5a6b" stroke="#fff" strokeWidth="1.300" /><path d="M1 1v4h4V1M3 5v8h2" fill="none" stroke="#fff" strokeWidth="1.300" /></svg>
);
const SpeakerIcon = () => (
  <svg width="16" height="16" viewBox="0 0 17 16"><path d="M1 5h3l5-4v14l-5-4H1z" fill="#fff" stroke="#444" strokeWidth=".5" /><path d="M11 5c1.500 2 1.500 4 0 6M13 3c2.500 3 2.500 7 0 10" fill="none" stroke="#fff" strokeWidth="1.200" /></svg>
);
const ExpandIcon = () => <svg width="8" height="10" viewBox="0 0 8 10"><path d="M1 1l3 3 3-3M1 5l3 3 3-3" fill="none" stroke="#000" strokeWidth="1.800" /></svg>;

/* ---------- sheet data ---------- */
const rowHeights = [26, 20, 20, 20, 20, 20, 20, 20, 20, 20, 20, 20, 20, 20, 25, 20, 20, 20, 20, 20, 20, 20, 15, 17, 17, 17, 17, 22, 20, 20, 20, 20];
const boxCols = ["B", "C", "D", "E", "F", "G", "H"];
const farCols = ["I", "J", "K", "L", "M", "N", "O", "P", "Q", "R", "S", ""];

const menu: Record<number, string[]> = {
  2: ["월(5/15)", "화(5/16)", "수(5/17)", "목(5/18)", "금(5/19)", "토(5/20)", "일(5/21)"],
  3: ["보리밥/흰죽", "조밥/흰죽", "보리밥/흰죽", "흑미밥/흰죽", "조밥/흰죽", "보리밥/흰죽", "흑미밥/흰죽"],
  4: ["근대국", "북어무국", "얼갈이된장국", "홍합살미역국", "근대국", "버섯무국", "시금치콩나물국"],
  5: ["스크램블에그", "잔멸치볶음", "어묵야채볶음", "소세지야채볶음", "계란찜", "돈육장조림", "두부구이조림"],
  6: ["비름나물", "시금치나물", "쑥갓두부무침", "호박나물", "감자채볶음", "비름나물", "오이채무침"],
  7: ["양념깻잎", "돌자반", "김구이", "마늘쫑무침", "오복지무침", "김구이", "양념깻잎"],
  8: ["김치", "김치", "김치", "김치", "김치", "김치", "김치"],
  9: ["강낭콩밥/흰죽", "조밥/흰죽", "보리밥/흰죽", "흑미밥/흰죽", "조밥/흰죽", "보리밥/흰죽", "흑미밥/흰죽"],
  10: ["소고기미역국", "소고기해장국", "김치두부국", "올갱이아욱국", "콩나물국", "씨레기된장국", "얼갈이된장국"],
  11: ["고등어무조림", "두부두루치기", "닭감자볶음", "돈육잡채", "주꾸미볶음", "치킨까스/소스", "돈육볶음"],
  12: ["건새우마늘쫑", "맛살오이냉채", "새송이버섯볶", "도토리묵/양념", "데친두부/양념", "무엉채조림", "건새우마늘쫑볶\n음"],
  13: ["콩나물무침", "상추겉절이", "참나물무침", "치커리샐러드", "상추나물", "오이부추무침", "상추겉절이"],
  14: ["배추김치", "배추김치", "배추김치", "배추김치", "배추김치", "배추김치", "배추김치"],
  15: ["딸기요거트", "빵/야쿠르트", "검은콩두유", "떡/야쿠르트", "바나나/야쿠르트", "바나나/두유", "완두콩죽"],
  16: ["보리밥/야채죽", "조밥/깨죽", "보리밥/버섯죽", "흑미밥/야채죽", "조밥/버섯죽", "보리밥/소고기죽", "흑미밥/야채죽"],
  17: ["김치두부국", "조갯살부추국", "시금치조개국", "꽃게찌개", "동태탕", "물만두계란국", "김치두부국"],
  18: ["우채피망볶음", "돈육볶음", "조기구이", "두부계란전", "소불고기", "가자미무조림", "닭살야채볶음"],
  19: ["단호박조림", "미역줄기볶음", "연근조림", "골뱅이무침", "건새우마늘쫑볶\n음", "쑥갓두부무침", "감자조림"],
  20: ["상추나물", "머위나물", "오이부추무침", "콩나물무침", "시금치나물", "얼갈이나물", "치커리무침"],
  21: ["김치", "김치", "김치", "김치", "김치", "김치", "김치"],
  22: ["품목", "원산지", "품목", "원산지", "품목", "원산지", "품목"],
  23: ["쌀", "국내산", "돈육", "국내산", "닭고기", "국내산", "소시지"],
  24: ["김치", "국내산", "고추가루", "국내산", "소고기", "호주산", "(돈육/계육:국내산)"],
  25: ["고등어", "국내산", "조기", "중국산", "주꾸미", "베트남산", ""],
  26: ["동태", "러시아산", "꽃게", "중국산", "가자미", "미국산", ""],
};
const kinds: Record<string, TextKind> = {
  H4: "small", D5: "thin", E5: "small", H12: "wrap", F15: "small", G16: "small", F19: "wrap",
  B22: "label", D22: "label", E22: "label", F22: "label", G22: "label", H22: "label", H23: "note", H24: "note",
};
const sideCells: Record<number, { text: string; span: number; bg: string; h: number }> = {
  2: { text: "", span: 1, bg: "#ffffcc", h: 16 },
  3: { text: "조식", span: 6, bg: "#ccffff", h: 116 },
  9: { text: "중식", span: 6, bg: "#ffcccc", h: 116 },
  15: { text: "간식", span: 1, bg: "#ccffcc", h: 22 },
  16: { text: "석식", span: 6, bg: "#ffffcc", h: 116 },
  22: { text: "원\n산\n지\n표\n시", span: 6, bg: "#c5d9f1", h: 99 },
};
const groupStart = [2, 3, 9, 15, 16, 22];
const groupEnd = [2, 8, 14, 15, 21];

const cellBg = (row: number, i: number) => {
  if (row === 2) return "#ffffcc";
  if (row === 15) return "#ccffcc";
  if (row === 22) return "#c5d9f1";
  if (row > 22 && i % 2 === 1) return "#f2dddc";
  return "#fff";
};

function SheetRow({ row }: { row: number }) {
  const h = rowHeights[row - 1];
  const line = row >= 22 ? BLACK : PURPLE;
  const bottom: Edge = groupEnd.includes(row) ? "double" : row >= 22 ? "single" : "none";
  const starts = groupStart.includes(row);
  const side = sideCells[row];
  return (
    <GridRow $h={h}>
      <RowHead scope="row" $on={row === 13}>{row}</RowHead>
      {row === 1 && <SheetTitle colSpan={8}><div>주   간   식   단   표</div></SheetTitle>}
      {side && (
        <BoxCell rowSpan={side.span} $bg={side.bg} $line={line} $top $bottom="double" $bottomLine={row === 16 ? BLACK : line}>
          <CellText $h={side.h} $kind={row === 22 ? "side" : "normal"}>{side.text}</CellText>
        </BoxCell>
      )}
      {menu[row] && menu[row].map((text, i) => (
        <BoxCell key={i} $bg={cellBg(row, i)} $line={line} $top={starts} $bottom={bottom} $bottomLine={row === 21 ? BLACK : line}>
          <CellText $h={starts ? h - 5 : h - 3} $kind={kinds[boxCols[i] + row] || "normal"} $red={row === 2 && i === 6}>{text}</CellText>
        </BoxCell>
      ))}
      {row === 27 && (
        <BoxCell colSpan={7} $bg="#eaf1dd" $line={BLACK} $bottom="double">
          <CellText $h={14} $kind="foot">{"* 고혈압- 저염식    당뇨식- 잡곡밥 *        * 상기 식단은 시장수급사정에 따라 달라질수 있습니다."}</CellText>
        </BoxCell>
      )}
      {row >= 28 && ["A", ...boxCols].map((c) => <EmptyCell key={c} $top={row === 28 ? BLACK : undefined} />)}
      {farCols.map((c, i) => (
        <EmptyCell
          key={i}
          $left={c === "I" && row >= 2 && row <= 27 ? line : undefined}
          $noRight={c === "I" && row >= 4 && row <= 6}
          $noBottom={c === "I" && row >= 3 && row <= 6}
          $ink={row === 24 ? "#7a3b1d" : undefined}
        >
          {c === "M" && row === 24 && ";"}
          {c === "M" && row === 13 && <Selection />}
        </EmptyCell>
      ))}
    </GridRow>
  );
}

const Check = ({ label, checked, off }: { label: string; checked?: boolean; off?: boolean }) => (
  <CheckLabel $off={off}>
    <CheckBox type="checkbox" defaultChecked={checked} disabled={off} />
    {label}
  </CheckLabel>
);

const Big = ({ icon, w, on, children }: { icon: React.ReactNode; w: number; on?: boolean; children: React.ReactNode }) => (
  <BigButton $w={w} $on={on}><IconBox>{icon}</IconBox><span>{children}</span></BigButton>
);
const InlineCaret = styled.span<{ $alone?: boolean }>`
  display: inline-block;
  margin-left: ${(p) => (p.$alone ? 0 : 5)}px;
  vertical-align: 3px;
`;

export default function App() {
  return (
    <Window>
      <GlobalStyle />
      <TopArea>
        <TitleBar>
          <QuickBar>
            <QuickPill>
              <IconButton aria-label="저장"><SaveIcon /></IconButton>
              <IconButton aria-label="실행 취소"><UndoIcon /></IconButton>
              <Caret />
              <IconButton aria-label="다시 실행"><UndoIcon off /></IconButton>
              <Caret color="#a5b4ca" />
            </QuickPill>
            <IconButton aria-label="빠른 실행 도구 모음 사용자 지정"><QuickMore /></IconButton>
          </QuickBar>
          <TitleText>2017년 5월식단표 <span>- Microsoft Excel</span></TitleText>
          <WinButtons>
            <IconButton aria-label="최소화"><MinIcon /></IconButton>
            <IconButton aria-label="이전 크기로"><RestoreIcon /></IconButton>
            <IconButton aria-label="닫기"><CloseIcon /></IconButton>
          </WinButtons>
        </TitleBar>
        <TabBar>
          <TabList>
            {["홈", "삽입", "페이지 레이아웃", "수식", "데이터", "검토", "보기"].map((t) => (
              <Tab key={t} $active={t === "보기"}>{t}</Tab>
            ))}
          </TabList>
          <TabTools>
            <IconButton aria-label="도움말"><HelpIcon /></IconButton>
            <IconButton aria-label="창 최소화"><MinIcon /></IconButton>
            <IconButton aria-label="창 복원"><RestoreIcon /></IconButton>
            <IconButton aria-label="창 닫기"><CloseIcon /></IconButton>
          </TabTools>
        </TabBar>
        <OfficeButton aria-label="Office 단추"><OfficeLogo /></OfficeButton>
      </TopArea>

      <Ribbon>
        <RibbonPanel>
          <Group $w={290}>
            <GroupBody>
              <Big w={42} on icon={<NormalIcon />}>기본</Big>
              <Big w={52} icon={<PageIcon />}>{"페이지\n레이아웃"}</Big>
              <Big w={82} icon={<BreakIcon />}>{"페이지 나누기\n미리 보기"}</Big>
              <Separator />
              <Big w={56} icon={<CustomIcon />}>{"사용자\n지정 보기"}</Big>
              <Big w={42} icon={<FullIcon />}>{"전체\n화면"}</Big>
            </GroupBody>
            <GroupLabel>통합 문서 보기</GroupLabel>
          </Group>
          <Group $w={206}>
            <GroupBody>
              <CheckGrid>
                <Check label="눈금자" checked off />
                <Check label="수식 입력줄" checked />
                <Check label="눈금선" checked />
                <Check label="머리글" checked />
                <Check label="메시지 표시줄" off />
              </CheckGrid>
            </GroupBody>
            <GroupLabel>표시/숨기기</GroupLabel>
          </Group>
          <Group $w={166}>
            <GroupBody>
              <Big w={59} icon={<ZoomIcon />}>확대/축소</Big>
              <Big w={41} icon={<HundredIcon />}>100%</Big>
              <Big w={59} icon={<ZoomSelIcon />}>{"선택 영역\n확대/축소"}</Big>
            </GroupBody>
            <GroupLabel>확대/축소</GroupLabel>
          </Group>
          <Group $w={461}>
            <GroupBody>
              <Big w={43} icon={<NewWinIcon />}>새 창</Big>
              <Big w={42} icon={<ArrangeIcon />}>{"모두\n정렬"}</Big>
              <Big w={41} icon={<FreezeIcon />}>{"틀\n고정"}<InlineCaret><Caret /></InlineCaret></Big>
              <SmallColumn $w={91}>
                <SmallButton><SplitIcon />나누기</SmallButton>
                <SmallButton><HideIcon />숨기기</SmallButton>
                <SmallButton disabled><UnhideIcon />숨기기 취소</SmallButton>
              </SmallColumn>
              <Separator />
              <SmallColumn $w={122}>
                <SmallButton disabled><SideIcon />나란히 보기</SmallButton>
                <SmallButton disabled><SyncIcon />동시 스크롤</SmallButton>
                <SmallButton disabled><ResetIcon />창 위치 다시 정렬</SmallButton>
              </SmallColumn>
              <Separator />
              <Big w={57} icon={<WorkspaceIcon />}>{"작업 영역\n저장"}</Big>
              <Big w={42} icon={<SwitchIcon />}>{"창\n전환"}<InlineCaret><Caret /></InlineCaret></Big>
            </GroupBody>
            <GroupLabel>창</GroupLabel>
          </Group>
          <Group $w={50}>
            <GroupBody>
              <Big w={44} icon={<MacroIcon />}>{"매크로\n"}<InlineCaret $alone><Caret /></InlineCaret></Big>
            </GroupBody>
            <GroupLabel>매크로</GroupLabel>
          </Group>
        </RibbonPanel>
      </Ribbon>

      <FormulaBar>
        <NameBox>
          <NameInput aria-label="이름 상자" defaultValue="M13" />
          <Caret color="#000" w={8} />
        </NameBox>
        <FxArea>
          <FxPill><FxDot /><FxButton aria-label="함수 삽입">f<span>x</span></FxButton></FxPill>
        </FxArea>
        <FormulaInput aria-label="수식 입력줄" />
        <ExpandButton aria-label="수식 입력줄 확장"><ExpandIcon /></ExpandButton>
      </FormulaBar>

      <SheetArea>
        <SheetClip>
          <Grid>
            <colgroup>
              <col style={{ width: 23 }} />
              <col style={{ width: 34 }} />
              {boxCols.map((c) => <col key={c} style={{ width: 107 }} />)}
              {farCols.map((c) => <col key={c} style={{ width: c ? 54 : undefined }} />)}
            </colgroup>
            <thead>
              <tr>
                <Corner><CornerMark /></Corner>
                {["A", ...boxCols, ...farCols].map((c) => <ColHead key={c} scope="col" $on={c === "M"}>{c}</ColHead>)}
              </tr>
            </thead>
            <tbody>
              {rowHeights.map((_, i) => <SheetRow key={i} row={i + 1} />)}
            </tbody>
          </Grid>
        </SheetClip>
        <VScroll>
          <VSplit />
          <VArrow><Arrow dir="u" /></VArrow>
          <VThumb><Grip vertical /></VThumb>
          <VGap><Arrow dir="d" /></VGap>
        </VScroll>
      </SheetArea>

      <SheetTabs>
        <TabNav>
          <IconButton aria-label="첫 시트"><Arrow dir="l" bar /></IconButton>
          <IconButton aria-label="이전 시트"><Arrow dir="l" /></IconButton>
          <IconButton aria-label="다음 시트"><Arrow dir="r" /></IconButton>
          <IconButton aria-label="마지막 시트"><Arrow dir="r" bar /></IconButton>
        </TabNav>
        <TabSet>
          {["5월1주", "5월2주", "5월3주", "5월4주"].map((t, i) => (
            <SheetTab key={t} $first={i === 0} $active={t === "5월3주"}>{t}</SheetTab>
          ))}
          <SheetTab $w={36} aria-label="워크시트 삽입"><NewSheetIcon /></SheetTab>
        </TabSet>
        <HScroll>
          <HSplit />
          <HArrow $w={17}><Arrow dir="l" /></HArrow>
          <HThumb><Grip /></HThumb>
          <HRest />
          <HArrow $w={17}><Arrow dir="r" /></HArrow>
          <HSplit />
        </HScroll>
        <ScrollCorner />
      </SheetTabs>

      <StatusBar>
        <Ready>준비</Ready>
        <StatusRight>
          <ViewButtons>
            <ViewButton $on aria-label="기본"><ViewNormal /></ViewButton>
            <ViewButton aria-label="페이지 레이아웃"><ViewPage /></ViewButton>
            <ViewButton aria-label="페이지 나누기 미리 보기"><ViewBreak /></ViewButton>
          </ViewButtons>
          <Zoom>75%</Zoom>
          <ZoomTrack>
            <IconButton aria-label="축소"><ZoomSign /></IconButton>
            <ZoomRail><ZoomHandle /><Tick /></ZoomRail>
            <IconButton aria-label="확대"><ZoomSign plus /></IconButton>
          </ZoomTrack>
        </StatusRight>
      </StatusBar>

      <TaskBar>
        <TaskButton $w={54} aria-label="시작"><StartOrb /></TaskButton>
        <TaskButton $w={67} aria-label="Internet Explorer"><IeIcon /></TaskButton>
        <TaskButton $w={60} $open aria-label="Windows 탐색기"><ExplorerIcon /></TaskButton>
        <TaskButton $w={64} aria-label="Chrome"><ChromeIcon /></TaskButton>
        <TaskButton $w={60} $open aria-label="Excel"><ExcelIcon /></TaskButton>
        <Tray>
          <Ime>
            <GlobeIcon />
            <ImeButton $size={22}>A</ImeButton>
            <ImeButton $size={17}>漢</ImeButton>
          </Ime>
          <TrayMore aria-label="숨겨진 아이콘 표시"><Arrow dir="u" color="#fff" /></TrayMore>
          <FlagIcon />
          <NetIcon />
          <SpeakerIcon />
          <Clock>오전 9:35<br />2017-05-24</Clock>
        </Tray>
        <ShowDesktop aria-label="바탕 화면 보기" />
      </TaskBar>
    </Window>
  );
}
